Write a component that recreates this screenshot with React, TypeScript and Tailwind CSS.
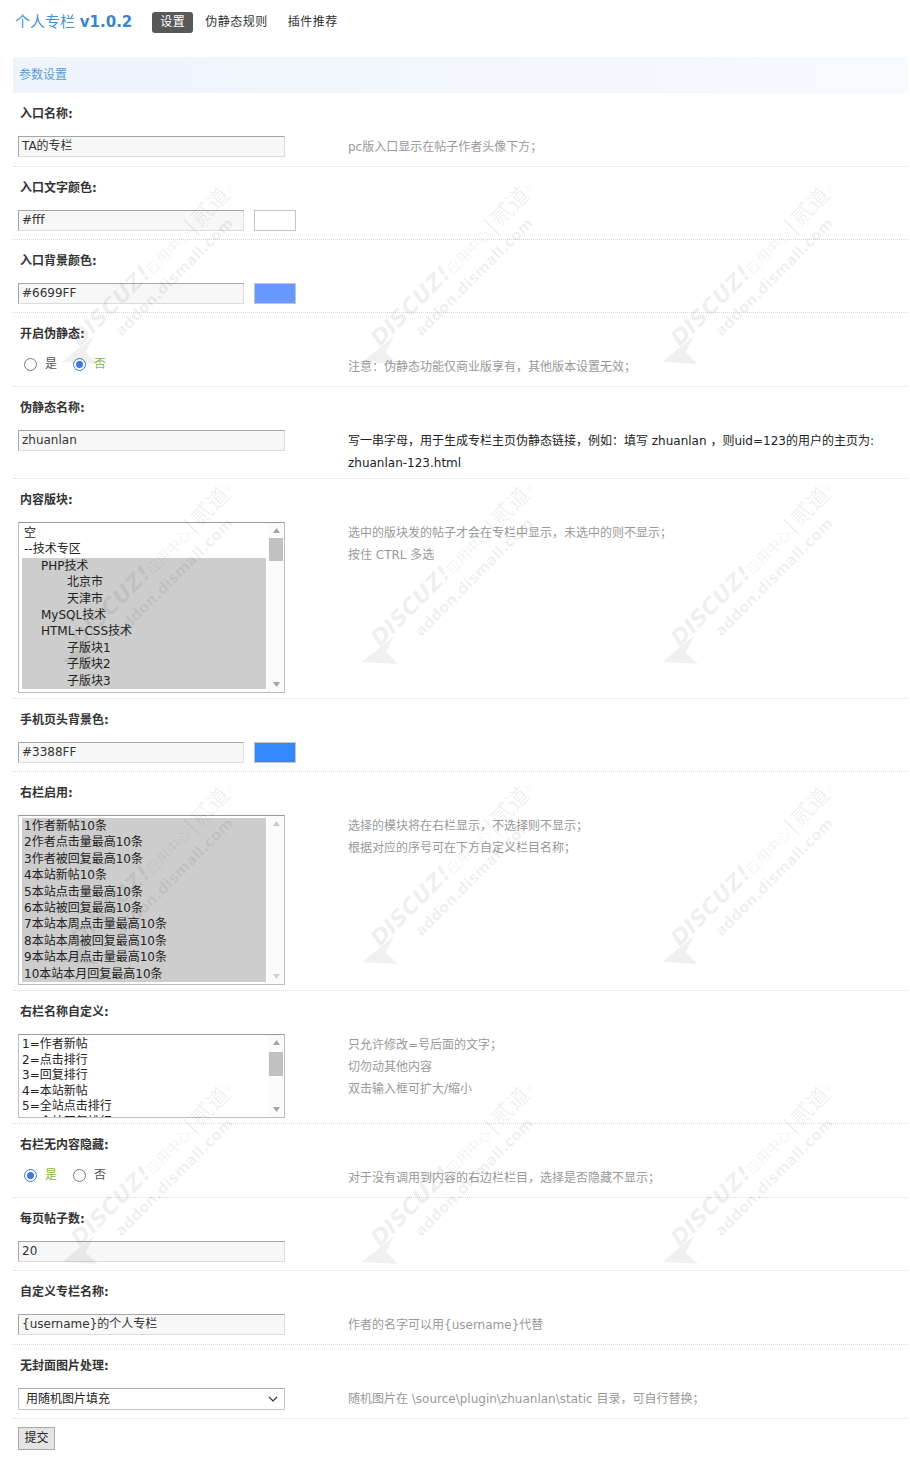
import type { ReactNode } from 'react';

const baseFont = "font-['DejaVu_Sans','Noto_Sans_CJK_SC',sans-serif]";

function Row({ label, children, comment, pb = 8 }: { label: string; children: ReactNode; comment?: ReactNode; pb?: number }) {
  const pbClass: Record<number, string> = { 3: 'pb-[3px]', 4: 'pb-[4px]', 5: 'pb-[5px]', 6: 'pb-[6px]', 8: 'pb-[8px]' };
  return (
    <div className="border-b border-dotted border-[#d8d8d8]">
      <div className="pl-[7px] pt-[13px] pb-[7px] leading-[16px] font-bold text-[#333]">{label}</div>
      <div className={`flex pt-[7px] ${pbClass[pb]}`}>
        <div className="w-[335px] shrink-0 pl-[5px]">{children}</div>
        <div className="leading-[22px] text-[#999] whitespace-nowrap">{comment}</div>
      </div>
    </div>
  );
}

function TextInput({ value, w = 'w-[267px]' }: { value: string; w?: string }) {
  return (
    <div
      className={`${w} h-[21px] border border-[#dcdcdc] border-t-[#a6a6a6] border-l-[#a6a6a6] bg-[#f7f7f7] pl-[3px] leading-[19px] text-[#333]`}
    >
      {value}
    </div>
  );
}

function ColorInput({ value, swatch }: { value: string; swatch: string }) {
  return (
    <div className="flex items-center gap-[10px]">
      <TextInput value={value} w="w-[226px]" />
      <div className={`w-[42px] h-[21px] border border-[#c4c4c4] ${swatch}`} />
    </div>
  );
}

function Radio({ checked }: { checked: boolean }) {
  if (checked) {
    return (
      <span className="shrink-0 w-[13px] h-[13px] rounded-full border-[1.5px] border-[#3f78e0] flex items-center justify-center bg-white">
        <span className="block w-[7px] h-[7px] rounded-full bg-[#3f78e0]" />
      </span>
    );
  }
  return <span className="shrink-0 block w-[13px] h-[13px] rounded-full border border-[#777] bg-white" />;
}

function RadioPair({ yes }: { yes: boolean }) {
  return (
    <div className="flex items-center h-[16px] pl-[6px]">
      <Radio checked={yes} />
      <span className={`ml-[8px] ${yes ? 'text-[#7fba3c]' : 'text-[#555]'}`}>是</span>
      <span className="ml-[16px] flex items-center">
        <Radio checked={!yes} />
      </span>
      <span className={`ml-[8px] ${!yes ? 'text-[#7fba3c]' : 'text-[#555]'}`}>否</span>
    </div>
  );
}

function Arrow({ up, color }: { up: boolean; color: string }) {
  return (
    <svg width="7" height="5" viewBox="0 0 7 5">
      {up ? <polygon points="0,5 7,5 3.5,0" fill={color} /> : <polygon points="0,0 7,0 3.5,5" fill={color} />}
    </svg>
  );
}

function ScrollBar({ thumb, light }: { thumb?: string; light?: boolean }) {
  const c = light ? '#c8c8c8' : '#a3a3a3';
  return (
    <div className="w-[16px] shrink-0 flex flex-col bg-[#fafafa]">
      <div className="h-[15px] flex items-center justify-center">
        <Arrow up color={c} />
      </div>
      <div className="flex-1">{thumb && <div className={`mx-[1px] bg-[#c1c1c1] ${thumb}`} />}</div>
      <div className="h-[15px] flex items-center justify-center">
        <Arrow up={false} color={light ? '#d2d2d2' : c} />
      </div>
    </div>
  );
}

type Opt = { text: string; indent?: string; sel?: boolean };

function ListBox({ options, h, thumb, light }: { options: Opt[]; h: string; thumb?: string; light?: boolean }) {
  return (
    <div className={`w-[267px] ${h} border border-[#bdbdbd] border-t-[#9a9a9a] bg-white flex`}>
      <div className="flex-1 overflow-hidden pt-[2px] pl-[3px] pr-[2px]">
        {options.map((o, i) => (
          <div
            key={i}
            className={`h-[16.4px] leading-[16.4px] pl-[2px] text-[#222] whitespace-nowrap ${o.sel ? 'bg-[#cdcdcd]' : ''}`}
          >
            <span className={o.indent}>{o.text}</span>
          </div>
        ))}
      </div>
      <ScrollBar thumb={thumb} light={light} />
    </div>
  );
}

function Watermark({ x, y }: { x: number; y: number }) {
  return (
    <div className="absolute w-[200px] h-[200px] pointer-events-none select-none" style={{ left: x, top: y }}>
      <svg className="absolute left-0 top-[160px]" width="40" height="40" viewBox="0 0 40 40">
        <polygon points="2,32 34,6 26,22 38,34" fill="rgba(0,0,0,0.06)" />
      </svg>
      <div className="absolute left-[100px] top-[100px] w-0 h-0">
        <div className="absolute -translate-x-1/2 -translate-y-1/2 -rotate-45 whitespace-nowrap text-black/[0.07] text-center">
          <div className="leading-[24px]">
            <span className="italic font-bold text-[22px] font-['DejaVu_Sans',sans-serif]">DISCUZ!</span>
            <span className="text-[14px] font-['Noto_Sans_CJK_SC',sans-serif]">应用中心</span>
            <span className="text-[22px] mx-[2px]">|</span>
            <span className="text-[22px] font-['Noto_Sans_CJK_SC',sans-serif]">贰道</span>
            <sup className="text-[9px]">®</sup>
          </div>
          <div className="leading-[18px] font-bold text-[15px] pl-[10px] font-['DejaVu_Sans',sans-serif]">addon.dismall.com</div>
        </div>
      </div>
    </div>
  );
}

const boards: Opt[] = [
  { text: '空' },
  { text: '--技术专区' },
  { text: 'PHP技术', indent: 'pl-[17px]', sel: true },
  { text: '北京市', indent: 'pl-[43px]', sel: true },
  { text: '天津市', indent: 'pl-[43px]', sel: true },
  { text: 'MySQL技术', indent: 'pl-[17px]', sel: true },
  { text: 'HTML+CSS技术', indent: 'pl-[17px]', sel: true },
  { text: '子版块1', indent: 'pl-[43px]', sel: true },
  { text: '子版块2', indent: 'pl-[43px]', sel: true },
  { text: '子版块3', indent: 'pl-[43px]', sel: true },
];

const sideBlocks: Opt[] = [
  '1作者新帖10条',
  '2作者点击量最高10条',
  '3作者被回复最高10条',
  '4本站新帖10条',
  '5本站点击量最高10条',
  '6本站被回复最高10条',
  '7本站本周点击量最高10条',
  '8本站本周被回复最高10条',
  '9本站本月点击量最高10条',
  '10本站本月回复最高10条',
].map((text) => ({ text, sel: true }));

const sideNames = ['1=作者新帖', '2=点击排行', '3=回复排行', '4=本站新帖', '5=全站点击排行', '6=全站回复排行'];

export default function App() {
  const marks: { x: number; y: number }[] = [];
  for (let r = 0; r < 4; r++) for (let c = 0; c < 3; c++) marks.push({ x: 60 + c * 300, y: 170 + r * 300 });

  return (
    <div className={`relative w-full min-h-[1462px] bg-white text-[12px] text-[#333] ${baseFont}`}>
      <div className="pl-[13px] pr-[2px]">
        <div className="h-[44px] flex items-center">
          <div className="ml-[2px] text-[15px] text-[#4a90cc]">
            个人专栏 <span className="font-bold text-[#3b86c8]">v1.0.2</span>
          </div>
          <div className="ml-[20px] flex items-center gap-[4px]">
            <span className="px-[8px] h-[21px] leading-[21px] rounded-[3px] bg-[#585858] text-white tracking-[0.5px]">设置</span>
            <span className="px-[8px] h-[21px] leading-[21px] text-[#333] tracking-[0.5px]">伪静态规则</span>
            <span className="px-[8px] h-[21px] leading-[21px] text-[#333] tracking-[0.5px]">插件推荐</span>
          </div>
        </div>

        <div className="mt-[13px] h-[36px] flex items-center pl-[6px] bg-linear-to-r from-[#eef4fc] to-[#f7fafe] text-[#5a9ad4]">
          参数设置
        </div>

        <Row label="入口名称:" comment="pc版入口显示在帖子作者头像下方；">
          <TextInput value="TA的专栏" />
        </Row>

        <Row label="入口文字颜色:">
          <ColorInput value="#fff" swatch="bg-white border-[#b0b0b0]" />
        </Row>

        <Row label="入口背景颜色:">
          <ColorInput value="#6699FF" swatch="bg-[#6699ff]" />
        </Row>

        <Row label="开启伪静态:" comment="注意：伪静态功能仅商业版享有，其他版本设置无效；">
          <RadioPair yes={false} />
        </Row>

        <Row
          label="伪静态名称:"
          pb={4}
          comment={
            <div className="text-[#222]">
              写一串字母，用于生成专栏主页伪静态链接，例如：填写 zhuanlan ，则uid=123的用户的主页为:
              <br />
              zhuanlan-123.html
            </div>
          }
        >
          <TextInput value="zhuanlan" />
        </Row>

        <Row
          label="内容版块:"
          pb={5}
          comment={
            <>
              选中的版块发的帖子才会在专栏中显示，未选中的则不显示；
              <br />
              按住 CTRL 多选
            </>
          }
        >
          <ListBox options={boards} h="h-[171px]" thumb="h-[23px]" />
        </Row>

        <Row label="手机页头背景色:">
          <ColorInput value="#3388FF" swatch="bg-[#3388ff]" />
        </Row>

        <Row
          label="右栏启用:"
          pb={5}
          comment={
            <>
              选择的模块将在右栏显示，不选择则不显示；
              <br />
              根据对应的序号可在下方自定义栏目名称；
            </>
          }
        >
          <ListBox options={sideBlocks} h="h-[170px]" light />
        </Row>

        <Row
          label="右栏名称自定义:"
          pb={5}
          comment={
            <>
              只允许修改=号后面的文字；
              <br />
              切勿动其他内容
              <br />
              双击输入框可扩大/缩小
            </>
          }
        >
          <div className="w-[267px] h-[84px] border border-[#bdbdbd] border-t-[#9a9a9a] bg-white flex">
            <div className="flex-1 overflow-hidden pt-[2px] pl-[3px] leading-[15.5px] text-[#222]">
              {sideNames.map((n) => (
                <div key={n}>{n}</div>
              ))}
            </div>
            <ScrollBar thumb="h-[24px] mt-[2px]" />
          </div>
        </Row>

        <Row label="右栏无内容隐藏:" comment="对于没有调用到内容的右边栏栏目，选择是否隐藏不显示；">
          <RadioPair yes />
        </Row>

        <Row label="每页帖子数:">
          <TextInput value="20" />
        </Row>

        <Row label="自定义专栏名称:" comment="作者的名字可以用{username}代替">
          <TextInput value="{username}的个人专栏" />
        </Row>

        <Row label="无封面图片处理:" comment="随机图片在 \source\plugin\zhuanlan\static 目录，可自行替换；">
          <div className="w-[267px] h-[22px] border border-[#c4c4c4] border-t-[#a8a8a8] bg-white flex items-center justify-between pl-[7px] pr-[6px] text-[#222]">
            <span>用随机图片填充</span>
            <svg width="10" height="6" viewBox="0 0 10 6">
              <polyline points="1,1 5,5 9,1" fill="none" stroke="#333" strokeWidth="1.2" />
            </svg>
          </div>
        </Row>

        <div className="pl-[5px] pt-[8px]">
          <button className="w-[37px] h-[23px] border border-[#a8a8a8] bg-[#e4e4e4] text-[#222] leading-[21px]">提交</button>
        </div>
      </div>

      {marks.map((m, i) => (
        <Watermark key={i} x={m.x} y={m.y} />
      ))}
    </div>
  );
}
